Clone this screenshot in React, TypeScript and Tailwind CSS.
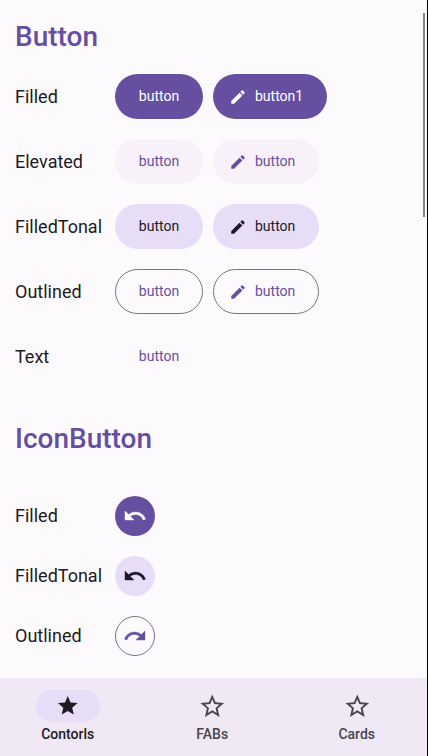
import type { ReactNode } from "react";

const EDIT =
  "M3 17.25V21h3.75L17.81 9.94l-3.75-3.75L3 17.25zM20.71 7.04a.996.996 0 0 0 0-1.41l-2.34-2.34a.996.996 0 0 0-1.41 0l-1.83 1.83 3.75 3.75 1.83-1.83z";
const UNDO =
  "M12.5 8c-2.65 0-5.05.99-6.9 2.6L2 7v9h9l-3.62-3.62c1.39-1.16 3.16-1.88 5.12-1.88 3.54 0 6.55 2.31 7.6 5.5l2.37-.78C21.08 11.03 17.15 8 12.5 8z";
const REDO =
  "M18.4 10.6C16.55 8.99 14.15 8 11.5 8c-4.65 0-8.58 3.03-9.96 7.22L3.9 16a8.002 8.002 0 0 1 7.6-5.5c1.95 0 3.73.72 5.12 1.88L13 16h9V7l-3.6 3.6z";
const STAR = "M12 17.27 18.18 21l-1.64-7.03L22 9.24l-7.19-.61L12 2 9.19 8.63 2 9.24l5.46 4.73L5.82 21z";
const STAR_OUTLINE =
  "m22 9.24-7.19-.62L12 2 9.19 8.63 2 9.24l5.46 4.73L5.82 21 12 17.27 18.18 21l-1.63-7.03L22 9.24zM12 15.4l-3.76 2.27 1-4.28-3.32-2.88 4.38-.38L12 6.1l1.71 4.04 4.38.38-3.32 2.88 1 4.28L12 15.4z";

function Icon({ d, className }: { d: string; className: string }) {
  return (
    <svg viewBox="0 0 24 24" fill="currentColor" className={`shrink-0 ${className}`}>
      <path d={d} />
    </svg>
  );
}

const variants = {
  filled: "bg-[#664fa1] text-white",
  elevated: "bg-[#f8f1f9] text-[#664fa1]",
  tonal: "bg-[#e7ddf7] text-[#1d192b]",
  outlined: "border border-[#79747e] text-[#664fa1]",
  text: "text-[#664fa1]",
};
type Variant = keyof typeof variants;

function Button({ variant, icon, children }: { variant: Variant; icon?: boolean; children: ReactNode }) {
  return (
    <button
      className={`flex h-[45px] items-center rounded-full text-sm ${icon ? "justify-start" : "w-[88px] justify-center"} ${variants[variant]} ${
        icon ? (variant === "outlined" ? "pr-[23px] pl-[15px]" : "pr-6 pl-4") : ""
      }`}
    >
      {icon && <Icon d={EDIT} className="mr-2 size-[18px]" />}
      <span className="pb-0.5">{children}</span>
    </button>
  );
}

function IconButton({ variant, d }: { variant: Variant; d: string }) {
  return (
    <button className={`flex size-10 items-center justify-center rounded-full ${variants[variant]}`}>
      <Icon d={d} className="size-6 stroke-current stroke-[0.4]" />
    </button>
  );
}

function Row({ label, children }: { label: string; children: ReactNode }) {
  return (
    <div className="flex items-center">
      <span className="w-[100px] text-lg leading-6 whitespace-nowrap text-[#1d1b20]">{label}</span>
      <div className="flex gap-2.5">{children}</div>
    </div>
  );
}

function NavItem({ label, active }: { label: string; active?: boolean }) {
  return (
    <a className={`flex w-[144.5px] flex-col items-center pt-3 ${active ? "text-[#1d1b20]" : "text-[#49454f]"}`}>
      <span className={`flex h-8 w-16 items-center justify-center rounded-full ${active ? "bg-[#e7ddf7]" : ""}`}>
        <Icon d={active ? STAR : STAR_OUTLINE} className={active ? "size-[23.5px]" : "size-[28.5px]"} />
      </span>
      <span className="mt-1 text-sm leading-4 font-medium">{label}</span>
    </a>
  );
}

export default function App() {
  return (
    <div className="relative flex h-[756px] w-[428px] flex-col overflow-hidden border-r border-black bg-[#fdfafe] font-[Roboto,sans-serif]">
      <main className="flex-1 px-[15px] pt-[21px]">
        <h1 className="text-[28px] leading-8 font-medium text-[#664fa1]">Button</h1>
        <div className="mt-[21px] flex flex-col gap-5">
          <Row label="Filled">
            <Button variant="filled">button</Button>
            <Button variant="filled" icon>button1</Button>
          </Row>
          <Row label="Elevated">
            <Button variant="elevated">button</Button>
            <Button variant="elevated" icon>button</Button>
          </Row>
          <Row label="FilledTonal">
            <Button variant="tonal">button</Button>
            <Button variant="tonal" icon>button</Button>
          </Row>
          <Row label="Outlined">
            <Button variant="outlined">button</Button>
            <Button variant="outlined" icon>button</Button>
          </Row>
          <Row label="Text">
            <Button variant="text">button</Button>
          </Row>
        </div>
        <h1 className="mt-11 text-[28px] leading-8 font-medium text-[#664fa1]">IconButton</h1>
        <div className="mt-[41px] flex flex-col gap-5">
          <Row label="Filled">
            <IconButton variant="filled" d={UNDO} />
          </Row>
          <Row label="FilledTonal">
            <IconButton variant="tonal" d={UNDO} />
          </Row>
          <Row label="Outlined">
            <IconButton variant="outlined" d={REDO} />
          </Row>
        </div>
      </main>
      <nav className="flex h-[78px] shrink-0 justify-center bg-[#f0e8f5]">
        <div className="-ml-[2.5px] flex">
          <NavItem label="Contorls" active />
          <NavItem label="FABs" />
          <NavItem label="Cards" />
        </div>
      </nav>
      <div className="absolute top-[13px] right-[2px] h-[204px] w-[2px] bg-[#878588]" />
    </div>
  );
}
